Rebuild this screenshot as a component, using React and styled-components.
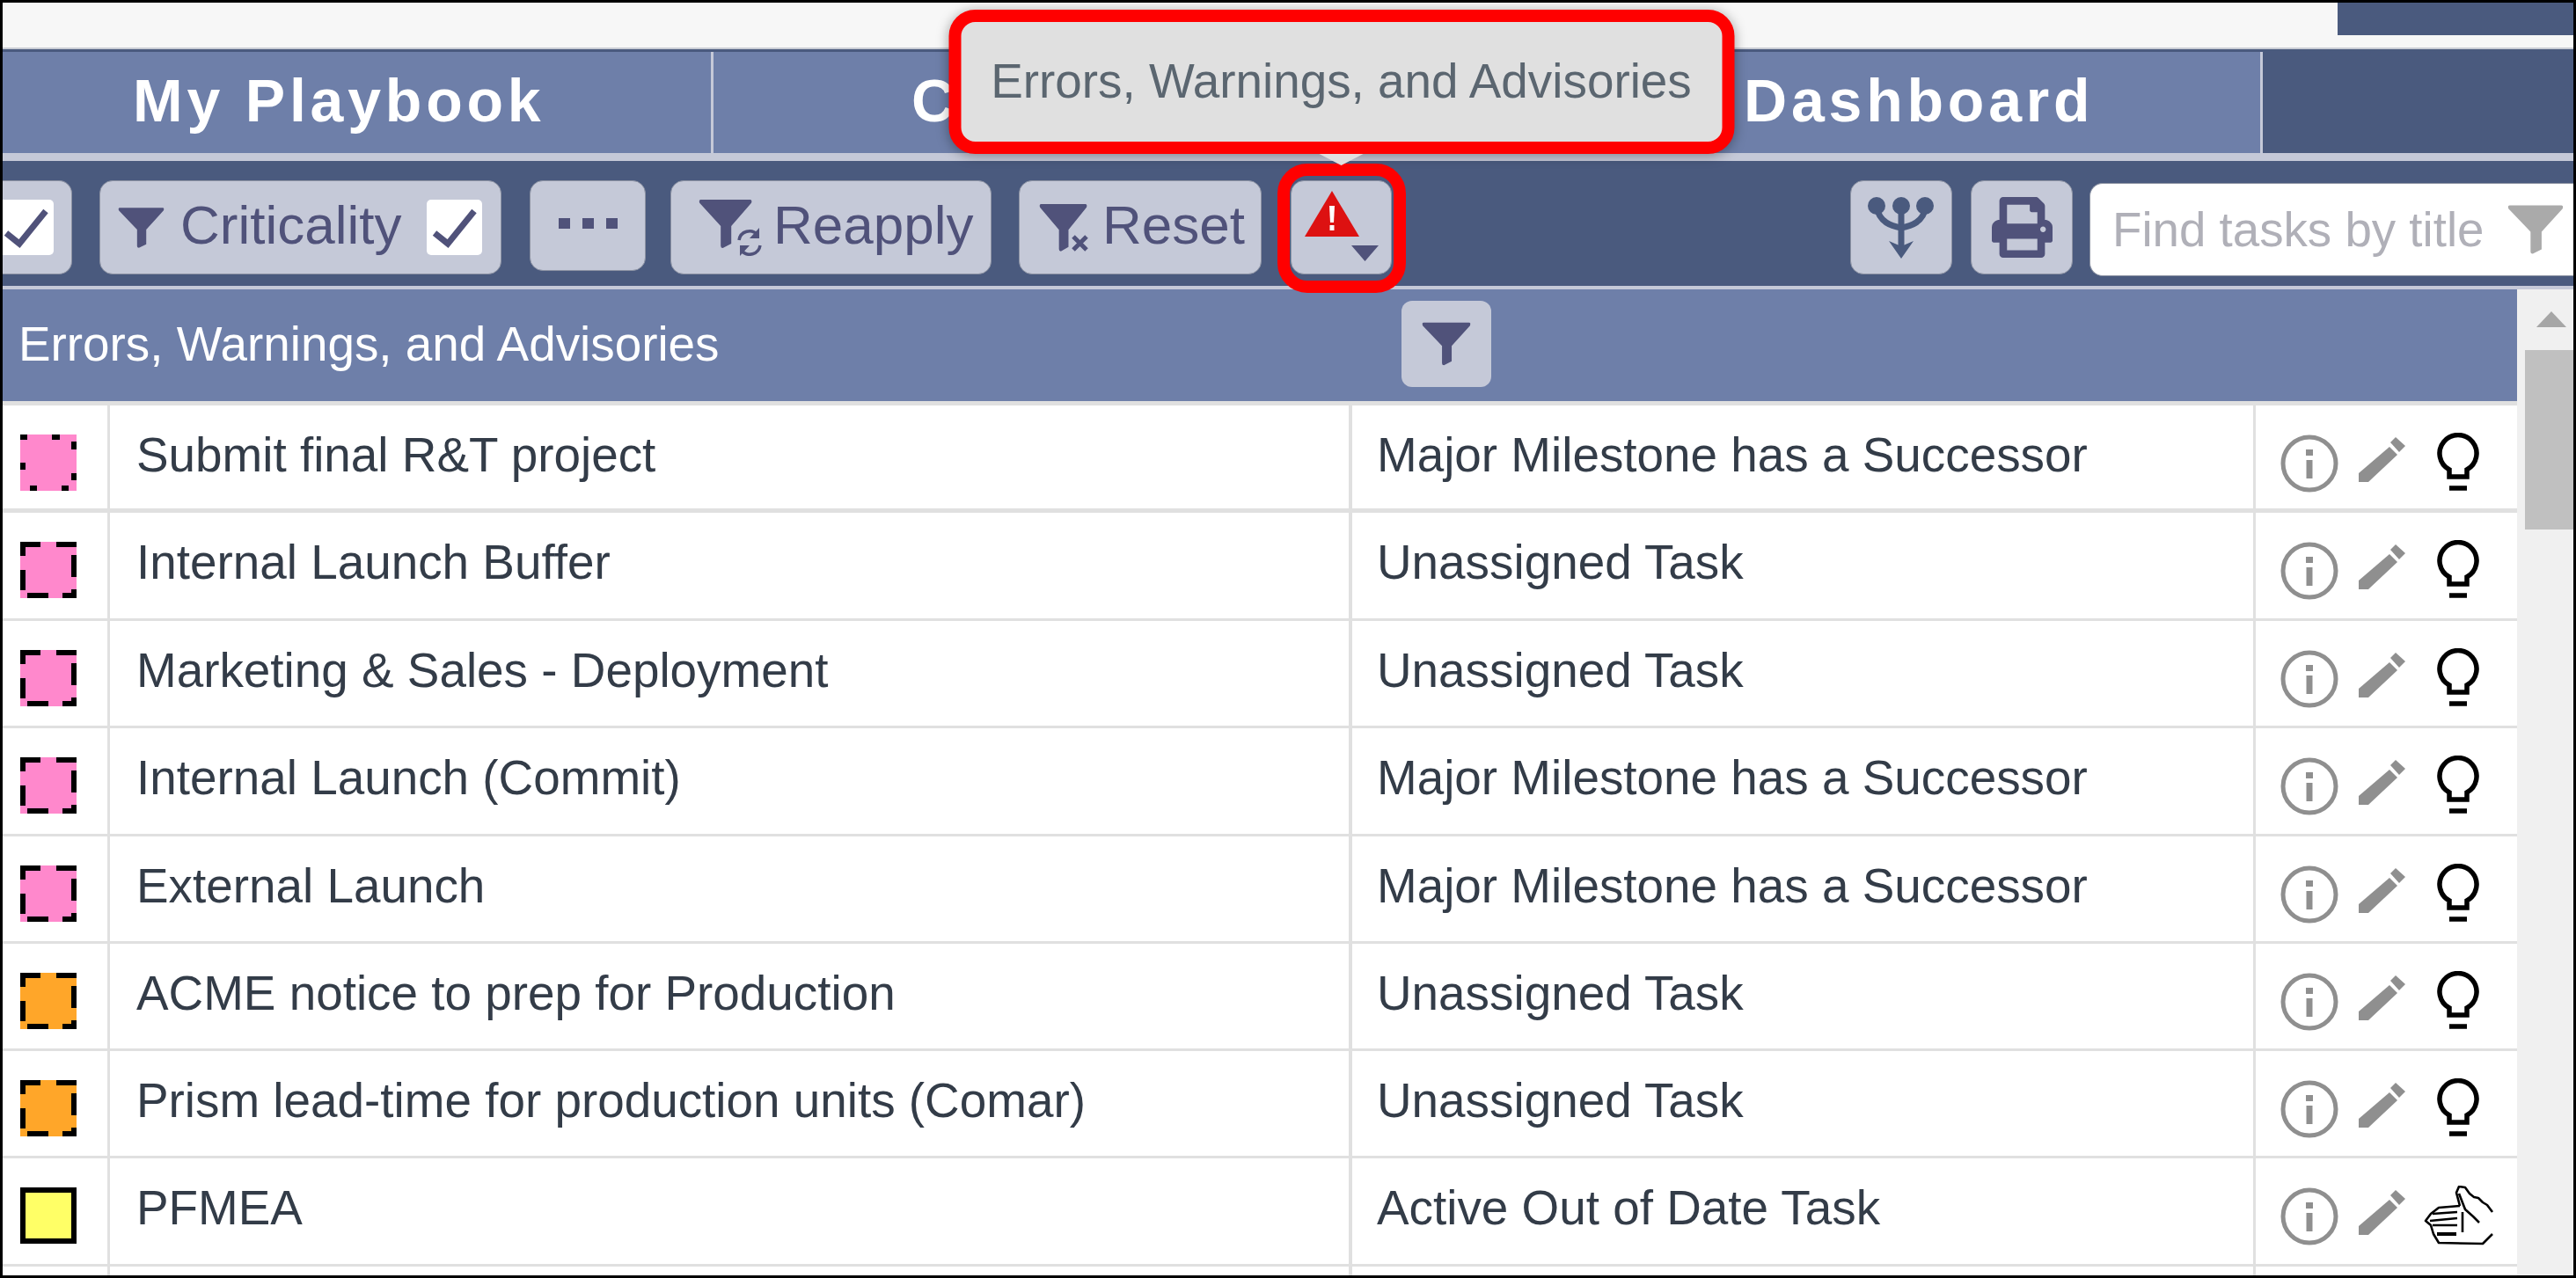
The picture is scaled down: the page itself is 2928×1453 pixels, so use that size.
import React from "react";
import styled, { createGlobalStyle } from "styled-components";
import { FaPrint } from "react-icons/fa";

const GlobalStyle = createGlobalStyle`
  html, body {
    margin: 0;
    padding: 0;
    background: #fff;
  }
  * {
    box-sizing: border-box;
  }
`;

const Page = styled.div`
  width: 2928px;
  height: 1453px;
  border: 3px solid #000;
  overflow: hidden;
  display: flex;
  flex-direction: column;
  font-family: "Liberation Sans", Arial, sans-serif;
`;

const TopBar = styled.div`
  height: 53px;
  flex-shrink: 0;
  display: flex;
  justify-content: flex-end;
  align-items: flex-start;
  background: #f7f7f7;
  border-bottom: 2px solid #c9ccd4;
`;

const UserBlock = styled.div`
  width: 268px;
  height: 37px;
  background: #4a5a7e;
`;

const TabBar = styled.div`
  height: 118px;
  flex-shrink: 0;
  display: flex;
  background: #4a5a7e;
  border-top: 3px solid #4a5a7e;
`;

const Tab = styled.div`
  width: ${({ $width }) => $width}px;
  padding: 0 0 6px ${({ $indent }) => $indent}px;
  display: flex;
  align-items: center;
  background: #6e7fa9;
  border-right: 3px solid #c5c9d8;
  color: #fff;
  font-size: 68px;
  font-weight: 700;
  letter-spacing: 4.8px;
  white-space: nowrap;
  overflow: hidden;
`;

const TabRule = styled.div`
  height: 9px;
  flex-shrink: 0;
  background: #c5c9d8;
`;

const Toolbar = styled.div`
  height: 142px;
  flex-shrink: 0;
  display: flex;
  align-items: flex-start;
  padding-top: 22px;
  background: #4a5a7e;
`;

const ToolButton = styled.div`
  position: relative;
  flex-shrink: 0;
  width: ${({ $width }) => $width}px;
  height: ${({ $height }) => $height || 107}px;
  margin-left: ${({ $gap }) => $gap || 0}px;
  padding-left: ${({ $inset }) => $inset || 0}px;
  display: flex;
  align-items: center;
  justify-content: ${({ $center }) => ($center ? "center" : "flex-start")};
  background: #c5c9d8;
  border: 1px solid #8d93a3;
  border-radius: 15px;
  color: #50527a;
  font-size: 62px;
  white-space: nowrap;
`;

const CutButton = styled(ToolButton)`
  justify-content: flex-end;
  padding-right: 20px;
  border-left: none;
  border-radius: 0 15px 15px 0;
  overflow: hidden;
`;

const Label = styled.span`
  margin-left: ${({ $gap }) => $gap || 0}px;
  position: relative;
  top: -3px;
`;

const CheckBox = styled.span`
  flex-shrink: 0;
  width: 63px;
  height: 63px;
  margin-left: ${({ $gap }) => $gap || 0}px;
  display: flex;
  background: #fff;
  border-radius: 5px;
`;

const Dots = styled.span`
  display: flex;
  gap: 14px;
  position: relative;
  top: -3px;
`;

const Dot = styled.span`
  width: 13px;
  height: 12px;
  background: #50527a;
`;

const WarnIcon = styled.svg`
  position: absolute;
  left: 15px;
  top: 11px;
`;

const ButtonRing = styled.div`
  position: absolute;
  left: -16px;
  top: -20px;
  width: 146px;
  height: 147px;
  border: 14px solid #f00;
  border-radius: 34px;
  pointer-events: none;
`;

const Tooltip = styled.div`
  position: absolute;
  left: 50%;
  top: -195px;
  transform: translateX(-50%);
  width: 893px;
  height: 164px;
  z-index: 5;
  display: flex;
  align-items: center;
  justify-content: center;
  padding-bottom: 3px;
  background: #e0e0e0;
  border: 14px solid #f00;
  border-radius: 30px;
  box-shadow: 0 2px 14px rgba(0, 0, 0, 0.35);
  color: #5b6670;
  font-size: 54.85px;

  &::after {
    content: "";
    position: absolute;
    left: 50%;
    bottom: -27px;
    margin-left: -25px;
    border-left: 25px solid transparent;
    border-right: 25px solid transparent;
    border-top: 13px solid #e0e0e0;
  }
`;

const Spacer = styled.div`
  flex: 1;
`;

const SearchBox = styled.div`
  flex: 0 0 550px;
  height: 106px;
  margin: 3px 0 0 19px;
  padding: 0 11px 0 25px;
  display: flex;
  align-items: center;
  justify-content: space-between;
  background: #fff;
  border: 1px solid #8d93a3;
  border-right: none;
  border-radius: 15px 0 0 15px;
  color: #b0b0b8;
  font-size: 54.7px;
  white-space: nowrap;
`;

const TablePane = styled.div`
  flex: 1;
  min-height: 0;
  display: flex;
  border-top: 4px solid #c5c9d8;
`;

const TableMain = styled.div`
  width: 2858px;
  flex-shrink: 0;
  display: flex;
  flex-direction: column;
  background: #fff;
`;

const TableHead = styled.div`
  height: 127px;
  flex-shrink: 0;
  display: flex;
  align-items: center;
  background: #6e7fa9;
  color: #fff;
  font-size: 54.85px;
`;

const HeadTitle = styled.div`
  width: 1590px;
  padding-left: 18px;
  position: relative;
  top: -2px;
`;

const HeadFilter = styled.div`
  width: 102px;
  height: 98px;
  position: relative;
  top: -2px;
  display: flex;
  align-items: center;
  justify-content: center;
  background: #c5c9d8;
  border-radius: 12px;
`;

const Row = styled.div`
  height: ${({ $height }) => $height || 122.3}px;
  flex-shrink: 0;
  display: flex;
  border-top: ${({ $thick }) => ($thick ? 5 : 3)}px solid #e0e0e0;
  color: #333c48;
  font-size: 54.85px;
  line-height: 66px;
`;

const Cell = styled.div`
  flex-shrink: 0;
  width: ${({ $width }) => $width}px;
  padding-left: ${({ $indent }) => $indent}px;
  padding-top: 23px;
  border-right: ${({ $rule }) => $rule || 3}px solid #e0e0e0;
  white-space: nowrap;
`;

const SwatchCell = styled(Cell)`
  padding-top: 33px;
`;

const ActionCell = styled.div`
  flex: 1;
  display: grid;
  grid-template-columns: 66px 55px 80px;
  column-gap: 21px;
  padding: 33px 0 0 28px;
  align-items: start;
`;

const BulbSlot = styled.div`
  display: flex;
  justify-content: center;
  margin-left: ${({ $shift }) => $shift || 0}px;
  margin-top: -2px;
`;

const PencilSlot = styled.div`
  margin-top: 2px;
`;

const ScrollTrack = styled.div`
  flex: 1;
  position: relative;
  padding-left: 9px;
  background: #f0f0f0;
`;

const ScrollArrow = styled.div`
  width: 0;
  margin: 25px 0 0 13px;
  border-left: 17px solid transparent;
  border-right: 17px solid transparent;
  border-bottom: 18px solid #a6a6a6;
`;

const ScrollThumb = styled.div`
  height: 204px;
  margin-top: 26px;
  background: #c0c0c0;
`;

const funnelPath =
  "M2 0H49Q51 0 50 3L31 24V40L23 44Q21 44 21 42V24L1 3Q0 0 2 0Z";

const Funnel = ({ width = 51, height = 44, color = "#50527a" }) => (
  <svg width={width} height={height} viewBox="0 0 51 44">
    <path d={funnelPath} fill={color} />
  </svg>
);

const ReapplyFunnel = () => (
  <svg width="73" height="64" viewBox="0 0 73 64">
    <path d={funnelPath} fill="#50527a" transform="scale(1.2 1.25)" />
    <g fill="none" stroke="#50527a" strokeWidth="3.5">
      <path d="M46 46A12 12 0 0 1 67 40" />
      <path d="M70 52A12 12 0 0 1 49 58" />
    </g>
    <path d="M69 32V44H58ZM47 64V52H58Z" fill="#50527a" />
  </svg>
);

const ResetFunnel = () => (
  <svg width="57" height="54" viewBox="0 0 57 54">
    <path d={funnelPath} fill="#50527a" transform="scale(1.08 1.22)" />
    <path d="M39 37L54 52M54 37L39 52" stroke="#50527a" strokeWidth="5" />
  </svg>
);

const Check = () => (
  <svg width="63" height="63" viewBox="0 0 63 63">
    <path d="M9 38L24 50L54 13" fill="none" stroke="#50527a" strokeWidth="7" />
  </svg>
);

const WarningGlyph = () => (
  <WarnIcon width="85" height="82" viewBox="0 0 85 82">
    <path d="M31 0L62 52H0Z" fill="#dd1111" />
    <path d="M28 17H34L33 36H29Z" fill="#fff" />
    <rect x="28.5" y="39" width="5" height="6" fill="#fff" />
    <path d="M53 62H84L68.5 80Z" fill="#50527a" />
  </WarnIcon>
);

const BranchGlyph = () => (
  <svg width="78" height="72" viewBox="0 0 78 72">
    <g fill="none" stroke="#4a5a7e" strokeWidth="7">
      <path d="M39 10V58" />
      <path d="M11 12C14 30 28 34 39 36C50 34 64 30 67 12" />
    </g>
    <g fill="#4a5a7e">
      <circle cx="11" cy="11" r="10" />
      <circle cx="39" cy="11" r="10" />
      <circle cx="66" cy="11" r="10" />
      <path d="M25 51L39 57L53 51L39 71Z" />
    </g>
  </svg>
);

const InfoGlyph = () => (
  <svg width="66" height="66" viewBox="0 0 66 66">
    <circle cx="33" cy="33" r="30" fill="none" stroke="#8f8f8f" strokeWidth="5" />
    <rect x="29" y="17" width="8" height="7" fill="#8f8f8f" />
    <rect x="29.5" y="29" width="7" height="21" fill="#8f8f8f" />
  </svg>
);

const PencilGlyph = () => (
  <svg width="55" height="53" viewBox="0 0 55 53">
    <path d="M2 52V42L37 12L46 21L13 52Z" fill="#8f8f8f" />
    <path d="M38 7L44 1L55 11L48 18Z" fill="#8f8f8f" />
  </svg>
);

const BulbGlyph = () => (
  <svg width="48" height="66" viewBox="0 0 48 66">
    <g fill="none" stroke="#000" strokeWidth="5.5">
      <path d="M14 50H34V42A21 21 0 1 0 14 42Z" />
      <path d="M14 63H34" />
    </g>
  </svg>
);

const HandGlyph = () => (
  <svg width="80" height="68" viewBox="0 0 80 68">
    <g fill="none" stroke="#000" strokeWidth="2.6" strokeLinejoin="round">
      <path d="M41 23L37 8L40 1L47 2L52 9L57 13L62 14L67 19L72 22L78 30" />
      <path d="M40 9L47 27L56 35L63 42" />
      <path d="M41 23L17 25L8 32L2 40L8 45L11 55L17 65L67 66L78 55" />
      <path d="M10 32L38 30M7 40L38 37M10 45L38 45M44 30V53" />
      <path d="M15 55L37 55" strokeWidth="4" />
    </g>
  </svg>
);

const DOTTED =
  "M0 3H8M36 3H45M61 8V17M61 44V52M55 61H47M19 61H11M3 40V32";
const DASHED =
  "M23 3H3V16M41 3H64M61 15V40M61 54V61H48M32 61H8M3 55V32";
const SOLID = "M3 3H61V61H3Z";

const Swatch = ({ color, line }) => (
  <svg width="64" height="64" viewBox="0 0 64 64">
    <rect width="64" height="64" fill={color} />
    <path d={line} fill="none" stroke="#000" strokeWidth="6" />
  </svg>
);

const PINK = "#ff88cc";
const ORANGE = "#ffa629";
const YELLOW = "#ffff66";

const rows = [
  { title: "Submit final R&T project", issue: "Major Milestone has a Successor", color: PINK, line: DOTTED, thick: true, height: 122 },
  { title: "Internal Launch Buffer", issue: "Unassigned Task", color: PINK, line: DASHED, thick: true, height: 125 },
  { title: "Marketing & Sales - Deployment", issue: "Unassigned Task", color: PINK, line: DASHED },
  { title: "Internal Launch (Commit)", issue: "Major Milestone has a Successor", color: PINK, line: DASHED },
  { title: "External Launch", issue: "Major Milestone has a Successor", color: PINK, line: DASHED },
  { title: "ACME notice to prep for Production", issue: "Unassigned Task", color: ORANGE, line: DASHED },
  { title: "Prism lead-time for production units (Comar)", issue: "Unassigned Task", color: ORANGE, line: DASHED },
  { title: "PFMEA", issue: "Active Out of Date Task", color: YELLOW, line: SOLID, hand: true },
];

const App = () => (
  <>
    <GlobalStyle />
    <Page>
      <TopBar>
        <UserBlock />
      </TopBar>
      <TabBar>
        <Tab $width={808} $indent={148}>My Playbook</Tab>
        <Tab $width={880} $indent={225}>C</Tab>
        <Tab $width={881} $indent={291}>Dashboard</Tab>
      </TabBar>
      <TabRule />
      <Toolbar>
        <CutButton $width={79}>
          <CheckBox>
            <Check />
          </CheckBox>
        </CutButton>
        <ToolButton $width={457} $gap={31} $inset={20}>
          <Funnel width={53} height={46} />
          <Label $gap={18}>Criticality</Label>
          <CheckBox $gap={29}>
            <Check />
          </CheckBox>
        </ToolButton>
        <ToolButton $width={132} $height={103} $gap={32} $center>
          <Dots>
            <Dot />
            <Dot />
            <Dot />
          </Dots>
        </ToolButton>
        <ToolButton $width={365} $gap={28} $inset={31}>
          <ReapplyFunnel />
          <Label $gap={12}>Reapply</Label>
        </ToolButton>
        <ToolButton $width={276} $gap={31} $inset={22}>
          <ResetFunnel />
          <Label $gap={15}>Reset</Label>
        </ToolButton>
        <ToolButton $width={115} $gap={33}>
          <WarningGlyph />
          <ButtonRing />
          <Tooltip>Errors, Warnings, and Advisories</Tooltip>
        </ToolButton>
        <Spacer />
        <ToolButton $width={116} $center>
          <BranchGlyph />
        </ToolButton>
        <ToolButton $width={116} $gap={21} $center>
          <FaPrint size={69} color="#50527a" />
        </ToolButton>
        <SearchBox>
          Find tasks by title
          <Funnel width={64} height={56} color="#aaaaaa" />
        </SearchBox>
      </Toolbar>
      <TablePane>
        <TableMain>
          <TableHead>
            <HeadTitle>Errors, Warnings, and Advisories</HeadTitle>
            <HeadFilter>
              <Funnel width={56} height={50} />
            </HeadFilter>
          </TableHead>
          {rows.map((row) => (
            <Row key={row.title} $thick={row.thick} $height={row.height}>
              <SwatchCell $width={122} $indent={20}>
                <Swatch color={row.color} line={row.line} />
              </SwatchCell>
              <Cell $width={1412} $indent={30} $rule={4}>
                {row.title}
              </Cell>
              <Cell $width={1027} $indent={28}>
                {row.issue}
              </Cell>
              <ActionCell>
                <InfoGlyph />
                <PencilSlot>
                  <PencilGlyph />
                </PencilSlot>
                <BulbSlot $shift={row.hand ? 0 : -3}>
                  {row.hand ? <HandGlyph /> : <BulbGlyph />}
                </BulbSlot>
              </ActionCell>
            </Row>
          ))}
          <Row>
            <SwatchCell $width={122} $indent={20} />
            <Cell $width={1412} $indent={30} $rule={4} />
            <Cell $width={1027} $indent={28} />
          </Row>
        </TableMain>
        <ScrollTrack>
          <ScrollArrow />
          <ScrollThumb />
        </ScrollTrack>
      </TablePane>
    </Page>
  </>
);

export default App;
